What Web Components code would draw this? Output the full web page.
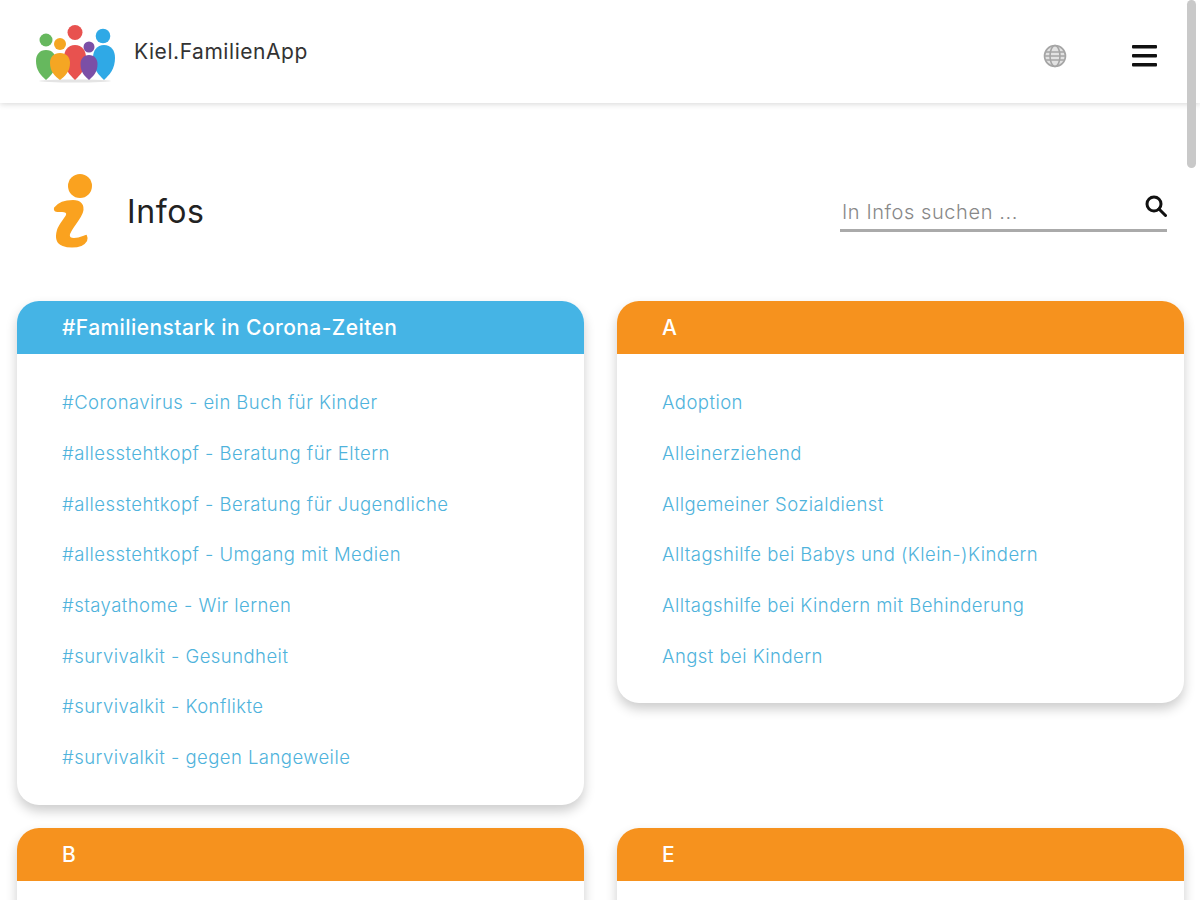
<!DOCTYPE html>
<html lang="de">
<head>
<meta charset="utf-8">
<title>Kiel.FamilienApp</title>
<style>
    html, body {
        margin: 0;
        height: 900px;
        overflow: hidden;
        background: #fff;
        font-family: "Inter", "Open Sans", sans-serif;
    }
    fam-page-head { margin: 71px 33px 0 54px; }
    .cards {
        display: grid;
        grid-template-columns: 567px 567px;
        column-gap: 33px;
        row-gap: 23px;
        align-items: start;
        padding: 0 16px 0 17px;
        margin-top: 53px;
    }
</style>
</head>
<body>
<fam-header></fam-header>
<fam-scrollbar></fam-scrollbar>
<fam-page-head></fam-page-head>
<div class="cards">
    <info-card heading="#Familienstark in Corona-Zeiten" color="#45b4e5">
        <info-link>#Coronavirus - ein Buch für Kinder</info-link>
        <info-link>#allesstehtkopf - Beratung für Eltern</info-link>
        <info-link>#allesstehtkopf - Beratung für Jugendliche</info-link>
        <info-link>#allesstehtkopf - Umgang mit Medien</info-link>
        <info-link>#stayathome - Wir lernen</info-link>
        <info-link>#survivalkit - Gesundheit</info-link>
        <info-link>#survivalkit - Konflikte</info-link>
        <info-link>#survivalkit - gegen Langeweile</info-link>
    </info-card>
    <info-card heading="A" color="#f6921e">
        <info-link>Adoption</info-link>
        <info-link>Alleinerziehend</info-link>
        <info-link>Allgemeiner Sozialdienst</info-link>
        <info-link>Alltagshilfe bei Babys und (Klein-)Kindern</info-link>
        <info-link>Alltagshilfe bei Kindern mit Behinderung</info-link>
        <info-link>Angst bei Kindern</info-link>
    </info-card>
    <info-card heading="B" color="#f6921e"></info-card>
    <info-card heading="E" color="#f6921e"></info-card>
</div>

<script>
// pin shaped body of one family member in the logo
function drop(cx, top, bottom, w, color) {
    const h = bottom - top;
    const a = top + h * 0.36;
    return `<path fill="${color}" d="M${cx} ${top}
        C${cx + w * 0.65} ${top} ${cx + w} ${top + h * 0.16} ${cx + w} ${a}
        C${cx + w} ${top + h * 0.7} ${cx + w * 0.5} ${top + h * 0.85} ${cx} ${bottom}
        C${cx - w * 0.5} ${top + h * 0.85} ${cx - w} ${top + h * 0.7} ${cx - w} ${a}
        C${cx - w} ${top + h * 0.16} ${cx - w * 0.65} ${top} ${cx} ${top}z"/>`;
}

class FamHeader extends HTMLElement {
    constructor() {
        super();
        this.attachShadow({ mode: 'open' });
    }

    connectedCallback() {
        this.shadowRoot.innerHTML = `
            <style>
                :host {
                    display: flex;
                    align-items: center;
                    height: 103px;
                    padding: 0 43px 0 36px;
                    background: #fff;
                    box-shadow: 0 1px 6px rgba(0,0,0,0.16);
                }
                .logo { width: 79px; height: 58px; margin-top: 5px; overflow: visible; }
                .name {
                    margin-left: 19px;
                    font-size: 21px;
                    color: #333;
                    letter-spacing: 0.55px;
                }
                .globe { margin-left: auto; width: 24px; height: 24px; margin-top: 8px; }
                .menu { margin-left: 65px; width: 25px; height: 24px; margin-top: 6px; }
            </style>
            <svg class="logo" viewBox="0 0 79 58">
                <ellipse cx="39" cy="56" rx="36" ry="1.5" fill="#e4e4e4"/>
                <circle cx="10" cy="15" r="6.5" fill="#66b85e"/>
                ${drop(10, 25, 55, 10, '#66b85e')}
                <circle cx="67" cy="11" r="7.3" fill="#2fa9e6"/>
                ${drop(68, 20, 55, 11, '#2fa9e6')}
                <circle cx="39" cy="7.5" r="7.5" fill="#e8524f"/>
                ${drop(39, 20, 55, 11, '#e8524f')}
                <circle cx="24" cy="19" r="6" fill="#f5a623"/>
                ${drop(24, 28, 55, 10, '#f5a623')}
                <circle cx="53" cy="22" r="5.5" fill="#7b4fa6"/>
                ${drop(53, 30, 55, 8.5, '#7b4fa6')}
            </svg>
            <span class="name">Kiel.FamilienApp</span>
            <svg class="globe" viewBox="0 0 24 24" fill="#e2e2e2" stroke="#a5a5a5" stroke-width="1.6">
                <circle cx="12" cy="12" r="10.5"/>
                <ellipse cx="12" cy="12" rx="5" ry="10.5" fill="none"/>
                <path d="M2 8h20M2 12h20M2 16h20" fill="none"/>
            </svg>
            <svg class="menu" viewBox="0 0 25 24" fill="#111">
                <rect y="2" width="25" height="3.4" rx="1"/>
                <rect y="11" width="25" height="3.4" rx="1"/>
                <rect y="20" width="25" height="3.4" rx="1"/>
            </svg>
        `;
    }
}

class FamScrollbar extends HTMLElement {
    constructor() {
        super();
        this.attachShadow({ mode: 'open' });
    }

    connectedCallback() {
        this.shadowRoot.innerHTML = `
            <style>
                :host {
                    position: absolute;
                    top: 0;
                    left: 1187px;
                    width: 9px;
                    height: 168px;
                    border-radius: 5px;
                    background: #c9c9c9;
                    z-index: 5;
                }
            </style>
        `;
    }
}

class FamPageHead extends HTMLElement {
    constructor() {
        super();
        this.attachShadow({ mode: 'open' });
    }

    connectedCallback() {
        this.shadowRoot.innerHTML = `
            <style>
                :host {
                    display: flex;
                    align-items: center;
                    height: 74px;
                }
                .icon { width: 39px; height: 74px; overflow: visible; }
                h1 {
                    margin: 0 0 0 34px;
                    font-size: 32px;
                    font-weight: 400;
                    color: #222;
                    letter-spacing: 0.6px;
                }
                .search {
                    margin-left: auto;
                    width: 327px;
                    height: 44px;
                    margin-top: -2px;
                    display: flex;
                    align-items: center;
                    justify-content: space-between;
                    box-sizing: border-box;
                    border-bottom: 3px solid #aaa;
                    padding: 0 0 0 2px;
                }
                .search span {
                    font-size: 20px;
                    font-weight: 300;
                    color: #888;
                    letter-spacing: 0.58px;
                    margin-top: 6px;
                }
                .search svg { width: 22px; height: 22px; margin-top: -6px; }
            </style>
            <svg class="icon" viewBox="0 0 39 74">
                <circle cx="26" cy="12" r="12" fill="#faa21f"/>
                <path d="M1 34C5 29 12 27 19 27C26 27 30 31 28 38C26 45 18 52 15 60C14 64 17 65 20 65C25 65 29 63 32 62C34 66 31 69 27 71C22 73 14 73 9 71C3 69 2 63 4 56C6 50 12 44 13 41C14 38 11 37 8 37C5 37 0 38 1 34z" fill="#faa21f" stroke="#faa21f" stroke-width="2"/>
            </svg>
            <h1>Infos</h1>
            <div class="search">
                <span>In Infos suchen ...</span>
                <svg viewBox="0 0 22 22" fill="none" stroke="#111" stroke-width="3">
                    <circle cx="9" cy="9" r="7"/>
                    <path d="M14 14l6.5 6.5" stroke-linecap="round"/>
                </svg>
            </div>
        `;
    }
}

class InfoCard extends HTMLElement {
    constructor() {
        super();
        this.attachShadow({ mode: 'open' });
    }

    connectedCallback() {
        const heading = this.getAttribute('heading') || '';
        const color = this.getAttribute('color') || '#f6921e';

        this.shadowRoot.innerHTML = `
            <style>
                :host {
                    display: block;
                    background: #fff;
                    border-radius: 22px;
                    box-shadow: 0 6px 12px rgba(0,0,0,0.2);
                    overflow: hidden;
                }
                .head {
                    height: 53px;
                    display: flex;
                    align-items: center;
                    padding-left: 45px;
                    background: ${color};
                    color: #fff;
                    font-size: 21px;
                    font-weight: 500;
                    letter-spacing: 0.42px;
                }
                .body {
                    padding: 22.3px 45px 23px;
                    min-height: 60px;
                }
            </style>
            <div class="head">${heading}</div>
            <div class="body"><slot></slot></div>
        `;
    }
}

class InfoLink extends HTMLElement {
    constructor() {
        super();
        this.attachShadow({ mode: 'open' });
    }

    connectedCallback() {
        this.shadowRoot.innerHTML = `
            <style>
                :host {
                    display: flex;
                    align-items: center;
                    box-sizing: border-box;
                    height: 50.7px;
                    padding-top: 1px;
                    font-size: 18.5px;
                    font-weight: 300;
                    color: #4fb3dc;
                    letter-spacing: 0.45px;
                }
            </style>
            <slot></slot>
        `;
    }
}

customElements.define('fam-header', FamHeader);
customElements.define('fam-scrollbar', FamScrollbar);
customElements.define('fam-page-head', FamPageHead);
customElements.define('info-card', InfoCard);
customElements.define('info-link', InfoLink);
</script>
</body>
</html>
